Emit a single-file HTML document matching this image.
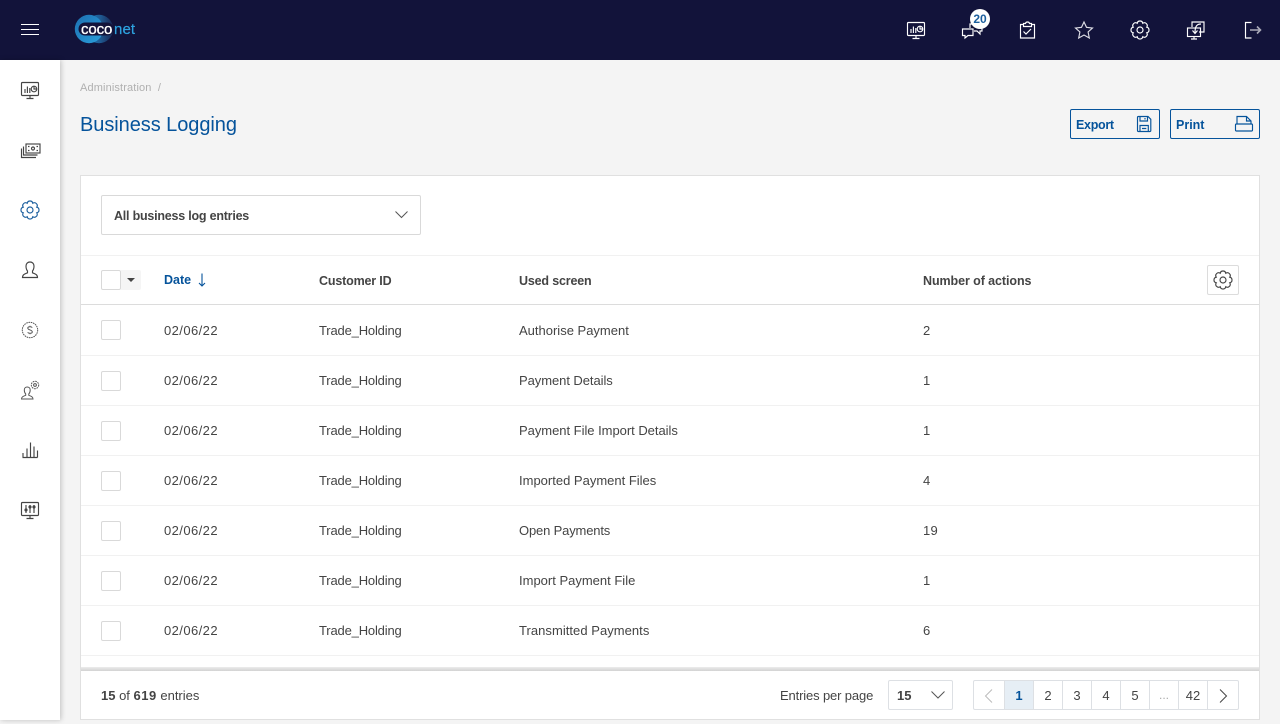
<!DOCTYPE html>
<html><head><meta charset="utf-8"><title>Business Logging</title>
<style>
*{box-sizing:border-box}
html,body{margin:0;padding:0}
body{width:1280px;height:724px;position:relative;overflow:hidden;background:#f4f4f4;font-family:"Liberation Sans",sans-serif;font-size:13px;color:#444}
.a{position:absolute}
.t{position:absolute;white-space:nowrap;line-height:16px}
.b{font-weight:bold}
.d{letter-spacing:.42px}
.h{letter-spacing:-.17px}
.n{letter-spacing:.25px}
svg{position:absolute;overflow:visible;fill:none}
.ic{width:24px;height:24px;stroke-width:1.15}
.w{stroke:#fff}.g{stroke:#444}
.cb{position:absolute;left:101px;width:20px;height:20px;background:#fff;border:1px solid #d9d9d9;border-radius:2px}
.ln{position:absolute;left:81px;width:1178px;height:1px;background:#f1f1f1}
.pg{position:absolute;top:680px;height:30px;border:1px solid #dde0e4;border-left:0;background:#fff;text-align:center;line-height:29px;font-size:13px;color:#444}
</style></head><body>
<svg width="0" height="0" style="position:absolute">
<defs>
<symbol id="mon" viewBox="0 0 24 24"><rect x="3.5" y="4.5" width="17" height="13" rx="1"/><path d="M12 17.5V20.5M8.5 20.5H15.5M7 15V11M9.4 15V8.5M11.8 15V10"/><circle cx="16" cy="11" r="2.8"/><path d="M16 8.2V11H18.8"/></symbol>
<symbol id="gear" viewBox="0 0 24 24"><path d="M14.79 5.26A2.85 2.85 0 0 0 9.21 5.26A2.85 2.85 0 0 0 5.26 9.21A2.85 2.85 0 0 0 5.26 14.79A2.85 2.85 0 0 0 9.21 18.74A2.85 2.85 0 0 0 14.79 18.74A2.85 2.85 0 0 0 18.74 14.79A2.85 2.85 0 0 0 18.74 9.21A2.85 2.85 0 0 0 14.79 5.26Z"/><circle cx="12" cy="12" r="3"/></symbol>
</defs></svg>

<!-- header -->
<div class="a" style="left:0;top:0;width:1280px;height:60px;background:#12133a"></div>
<div class="a" style="left:21px;top:24px;width:18px;height:1px;background:#fff"></div>
<div class="a" style="left:21px;top:29px;width:18px;height:1px;background:#fff"></div>
<div class="a" style="left:21px;top:34px;width:18px;height:1px;background:#fff"></div>

<!-- logo -->
<svg style="left:70px;top:10px" width="70" height="40">
<defs>
<linearGradient id="l1" x1="0" y1="0" x2="1" y2="1"><stop offset="0" stop-color="#1d6fb0"/><stop offset="1" stop-color="#2aa0dc"/></linearGradient>
<linearGradient id="l2" x1="0" y1="0" x2="1" y2="0"><stop offset="0" stop-color="#2078b8"/><stop offset=".55" stop-color="#1f5a92"/><stop offset="1" stop-color="#1a2450"/></linearGradient>
</defs>
<circle cx="29" cy="19" r="14.2" fill="url(#l2)"/>
<circle cx="19" cy="19" r="14.2" fill="url(#l1)"/>
<rect x="8.5" y="12.5" width="35" height="13" rx="6.5" fill="#12133a"/>
</svg>
<div class="t" style="left:81px;top:22px;font-size:15px;color:#fff;letter-spacing:-.1px;-webkit-text-stroke:.35px #fff">coco</div>
<div class="t" style="left:114px;top:22px;font-size:15px;color:#2ea3e0;letter-spacing:.1px;-webkit-text-stroke:.2px #2ea3e0">net</div>

<!-- top icons -->
<svg class="ic w" style="left:904px;top:18px" viewBox="0 0 24 24"><use href="#mon"/></svg>
<svg class="ic w" style="left:960px;top:18px" viewBox="0 0 24 24"><path d="M2.5 11H13V17.5H8L5 20V17.5H2.5Z" /><path d="M10 10V6H22V13H20V16L17 13H14"/></svg>
<div class="a b" style="left:970px;top:9px;width:20px;height:20px;border-radius:50%;background:#fff;color:#1c5f9e;font-size:12px;line-height:20px;text-align:center">20</div>
<svg class="ic w" style="left:1015px;top:18px" viewBox="0 0 24 24"><path d="M8.5 6.5H5.5V20H19.5V6.5H16.5"/><path d="M8.5 8.5V5.5H10.5C10.8 3.5 14.2 3.5 14.5 5.5H16.5V8.5Z"/><path d="M8.5 13.5L11 16L16 11"/></svg>
<svg class="ic" style="left:1072px;top:18px;stroke:#dcdce4" viewBox="0 0 24 24"><path d="M12 4L14.5 9.3L20.5 10L16.1 14L17.3 20L12 17L6.7 20L7.9 14L3.5 10L9.5 9.3Z"/></svg>
<svg class="ic w" style="left:1128px;top:18px" viewBox="0 0 24 24"><use href="#gear"/></svg>
<svg class="ic w" style="left:1184px;top:18px" viewBox="0 0 24 24"><path d="M8 9V4H20V14H15"/><rect x="3.5" y="10" width="13" height="8.5"/><path d="M10 18.5V21M7 21H13M17 6C13 6 11 8 11 15M8.5 12.5L11 15.5L13.5 12.5"/></svg>
<svg class="ic" style="left:1240px;top:18px;stroke:#fff" viewBox="0 0 24 24"><path d="M11.5 4.5H5.5V20H11.5"/><path d="M10 12H20.5M17 8.5L20.5 12L17 15.5" stroke="#a9a9b8" stroke-width="1.6"/></svg>

<!-- sidebar -->
<div class="a" style="left:0;top:60px;width:60px;height:660px;background:#fff;box-shadow:1px 0 5px rgba(0,0,0,.22)"></div>
<svg class="ic g" style="left:18px;top:78px" viewBox="0 0 24 24"><use href="#mon"/></svg>
<svg class="ic g" style="left:19px;top:138px" viewBox="0 0 24 24"><rect x="7" y="6" width="14" height="9"/><path d="M4.5 8.5V17H18.5M2.5 10.5V19.5H17"/><circle cx="14" cy="10.5" r="1.5"/><path d="M9 8.5H10.5M9 12.5H10.5M17.5 8.5H19M17.5 12.5H19"/></svg>
<svg class="ic" style="left:18px;top:198px;stroke:#1c5f9e" viewBox="0 0 24 24"><use href="#gear"/></svg>
<svg class="ic g" style="left:18px;top:258px" viewBox="0 0 24 24"><path d="M4.5 19.5C4.5 16.5 7 15.8 9.5 14.8V13C8.2 11.5 8 9.5 8 8C8 5.5 9.8 4 12 4C14.2 4 16 5.5 16 8C16 9.5 15.8 11.5 14.5 13V14.8C17 15.8 19.5 16.5 19.5 19.5Z"/></svg>
<svg class="ic" style="left:18px;top:318px;stroke:#555;stroke-width:1" viewBox="0 0 24 24"><circle cx="12" cy="12" r="7.7" stroke-dasharray="1.6 .7"/><path d="M14.2 9.7C13.6 8.5 9.8 8.2 9.8 10.1C9.8 12.2 14.3 11.7 14.3 13.9C14.3 15.8 10.4 15.6 9.7 14.3M12 7.8V8.8M12 15.2V16.2"/></svg>
<svg class="ic" style="left:18px;top:378px;stroke:#555;stroke-width:1" viewBox="0 0 24 24"><path d="M3.5 21C3.5 18.8 5.3 18.3 7.7 17.3V16C6.8 15 6.3 13.5 6.3 12C6.3 10 7.7 9 9.2 9C10.8 9 12.2 10 12.2 12C12.2 13.5 11.7 15 10.8 16V17.3C13.2 18.3 15 18.8 15 21Z"/><circle cx="17" cy="7" r="1.4"/><circle cx="17" cy="7" r="3.7" stroke-dasharray="1.7 .8"/></svg>
<svg class="ic g" style="left:18px;top:438px" viewBox="0 0 24 24"><path d="M4.5 19.5H19.5M5 19.5V15M9 19.5V10.5M12.5 19.5V4.5M16 19.5V8.5M19.5 19.5V12.5"/></svg>
<svg class="ic g" style="left:18px;top:498px" viewBox="0 0 24 24"><rect x="3.5" y="4.5" width="17" height="13" rx="1"/><path d="M12 17.5V20.5M8.5 20.5H15.5M8 7V15M12 7V15M16 7V15"/><circle cx="8" cy="12" r="1"/><circle cx="12" cy="9" r="1"/><circle cx="16" cy="9" r="1"/></svg>

<!-- page head -->
<div class="t" style="left:80px;top:80px;font-size:11px;letter-spacing:.13px;color:#b0b0b0">Administration&nbsp; /</div>
<div class="t" style="left:80px;top:113px;font-size:20px;line-height:24px;letter-spacing:-.06px;color:#05539b">Business Logging</div>

<div class="a" style="left:1070px;top:109px;width:90px;height:30px;border:1px solid #05539b;border-radius:2px"></div>
<div class="t b h" style="left:1076px;top:117px;color:#05539b;font-size:12.5px;letter-spacing:-.3px">Export</div>
<svg class="ic" style="left:1133px;top:112px;stroke:#05539b" viewBox="0 0 24 24"><path d="M5.5 4.5H15L17.8 7.3V18.5Q17.8 19.5 16.8 19.5H5.5Q4.5 19.5 4.5 18.5V5.5Q4.5 4.5 5.5 4.5Z"/><path d="M7 4.5V9H14.5V4.5M12 6V7.5M7 19.5V13.5H15.3V19.5M9 16.5H13.3"/></svg>
<div class="a" style="left:1170px;top:109px;width:90px;height:30px;border:1px solid #05539b;border-radius:2px"></div>
<div class="t b" style="left:1176px;top:117px;color:#05539b;font-size:12.5px">Print</div>
<svg class="ic" style="left:1232px;top:112px;stroke:#05539b" viewBox="0 0 24 24"><path d="M5 12V4.5H14.5L19 9V12"/><path d="M14.5 4.5V9H19"/><rect x="3.5" y="12" width="17" height="7" rx="1"/></svg>

<!-- card -->
<div class="a" style="left:80px;top:175px;width:1180px;height:545px;background:#fff;border:1px solid #e0e0e0"></div>

<div class="a" style="left:101px;top:195px;width:320px;height:40px;border:1px solid #d9d9d9;border-radius:2px"></div>
<div class="t b" style="left:114px;top:208px;font-size:12.5px;letter-spacing:-.22px;color:#444">All business log entries</div>
<svg style="left:395px;top:210px" width="14" height="10"><path d="M.5 1.5L6.5 7.5L12.5 1.5" stroke="#555" stroke-width="1"/></svg>

<div class="ln" style="top:255px"></div>
<div class="ln" style="top:304px;background:#dcdcdc"></div>

<div class="a" style="left:121px;top:270px;width:20px;height:20px;background:#f5f5f5;border-radius:0 2px 2px 0"></div>
<div class="cb" style="top:270px"></div>
<div class="a" style="left:127px;top:278px;width:0;height:0;border:4px solid transparent;border-top:4px solid #444;border-bottom:0"></div>

<div class="t b" style="left:164px;top:272px;color:#05539b;font-size:12.5px">Date</div>
<svg style="left:196px;top:273px" width="12" height="14"><path d="M6 .5V13M3 10L6 13L9 10" stroke="#05539b" stroke-width="1.1"/></svg>
<div class="t b h" style="left:319px;top:273px;font-size:12.5px">Customer ID</div>
<div class="t b h" style="left:519px;top:273px;font-size:12.5px">Used screen</div>
<div class="t b" style="left:923px;top:273px;font-size:12.5px;letter-spacing:-.08px">Number of actions</div>
<div class="a" style="left:1207px;top:265px;width:32px;height:30px;border:1px solid #dcdcdc;border-radius:2px"></div>
<svg class="ic g" style="left:1211px;top:268px" viewBox="0 0 24 24"><use href="#gear"/></svg>

<!-- rows -->
<div class="cb" style="top:320px"></div><div class="t d" style="left:164px;top:323px">02/06/22</div><div class="t h" style="left:319px;top:323px">Trade_Holding</div><div class="t" style="left:519px;top:323px">Authorise Payment</div><div class="t" style="left:923px;top:323px">2</div><div class="ln" style="top:355px"></div>
<div class="cb" style="top:371px"></div><div class="t d" style="left:164px;top:373px">02/06/22</div><div class="t h" style="left:319px;top:373px">Trade_Holding</div><div class="t" style="left:519px;top:373px;letter-spacing:-.06px">Payment Details</div><div class="t" style="left:923px;top:373px">1</div><div class="ln" style="top:405px"></div>
<div class="cb" style="top:421px"></div><div class="t d" style="left:164px;top:423px">02/06/22</div><div class="t h" style="left:319px;top:423px">Trade_Holding</div><div class="t" style="left:519px;top:423px;letter-spacing:-.03px">Payment File Import Details</div><div class="t" style="left:923px;top:423px">1</div><div class="ln" style="top:455px"></div>
<div class="cb" style="top:471px"></div><div class="t d" style="left:164px;top:473px">02/06/22</div><div class="t h" style="left:319px;top:473px">Trade_Holding</div><div class="t" style="left:519px;top:473px">Imported Payment Files</div><div class="t" style="left:923px;top:473px">4</div><div class="ln" style="top:505px"></div>
<div class="cb" style="top:521px"></div><div class="t d" style="left:164px;top:523px">02/06/22</div><div class="t h" style="left:319px;top:523px">Trade_Holding</div><div class="t" style="left:519px;top:523px;letter-spacing:-.16px">Open Payments</div><div class="t n" style="left:923px;top:523px">19</div><div class="ln" style="top:555px"></div>
<div class="cb" style="top:571px"></div><div class="t d" style="left:164px;top:573px">02/06/22</div><div class="t h" style="left:319px;top:573px">Trade_Holding</div><div class="t" style="left:519px;top:573px">Import Payment File</div><div class="t" style="left:923px;top:573px">1</div><div class="ln" style="top:605px"></div>
<div class="cb" style="top:621px"></div><div class="t d" style="left:164px;top:623px">02/06/22</div><div class="t h" style="left:319px;top:623px">Trade_Holding</div><div class="t" style="left:519px;top:623px;letter-spacing:.04px">Transmitted Payments</div><div class="t" style="left:923px;top:623px">6</div><div class="ln" style="top:655px"></div>

<!-- footer -->
<div class="a" style="left:81px;top:667px;width:1178px;height:4px;background:linear-gradient(#ececec,#d2d2d2)"></div>
<div class="t" style="left:101px;top:688px"><span class="b">15</span> of <span class="b" style="letter-spacing:.5px">619</span> entries</div>
<div class="t" style="left:780px;top:688px;letter-spacing:-.14px">Entries per page</div>
<div class="a" style="left:888px;top:680px;width:65px;height:30px;border:1px solid #dde0e4;border-radius:2px"></div>
<div class="t b" style="left:897px;top:688px">15</div>
<svg style="left:931px;top:691px" width="14" height="9"><path d="M.5 .5L7 7L13.5 .5" stroke="#555"/></svg>

<div class="pg" style="left:973px;width:32px;border-left:1px solid #dde0e4;border-radius:2px 0 0 2px"></div>
<svg style="left:984px;top:689px" width="9" height="14"><path d="M8 .5L1.5 7L8 13.5" stroke="#bbb"/></svg>
<div class="pg b" style="left:1005px;width:29px;background:#e6eef5;color:#05539b">1</div>
<div class="pg" style="left:1034px;width:29px">2</div>
<div class="pg" style="left:1063px;width:29px">3</div>
<div class="pg" style="left:1092px;width:29px">4</div>
<div class="pg" style="left:1121px;width:29px">5</div>
<div class="pg" style="left:1150px;width:29px;color:#aaa;font-size:12px">...</div>
<div class="pg" style="left:1179px;width:29px">42</div>
<div class="pg" style="left:1208px;width:31px;border-radius:0 2px 2px 0"></div>
<svg style="left:1219px;top:689px" width="9" height="14"><path d="M1 .5L7.5 7L1 13.5" stroke="#444"/></svg>
</body></html>
